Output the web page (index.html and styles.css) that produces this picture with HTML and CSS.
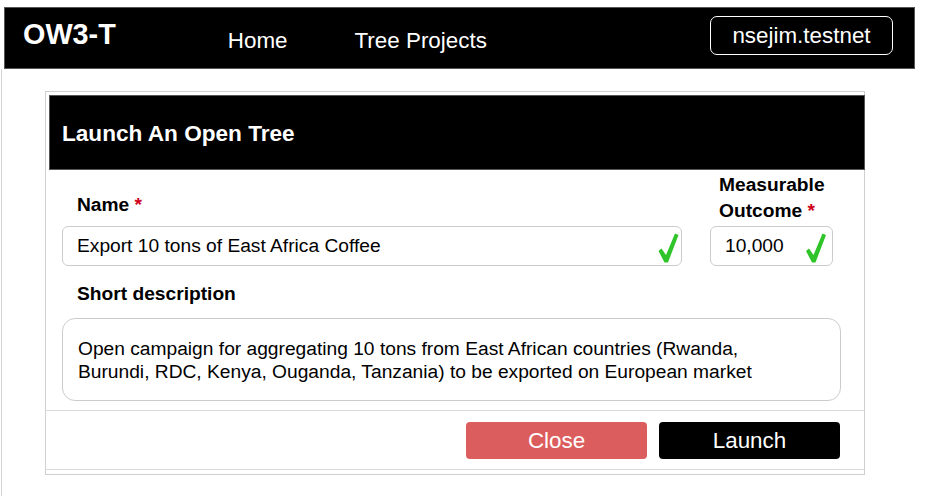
FILE: index.html
```html
<!DOCTYPE html>
<html lang="en">
<head>
<meta charset="utf-8">
<title>OW3-T</title>
<link rel="stylesheet" href="styles.css">
</head>
<body>
<nav class="topbar">
  <div class="brand">OW3-T</div>
  <div class="links">
    <a class="link" href="#">Home</a>
    <a class="link" href="#">Tree Projects</a>
  </div>
  <button class="account">nsejim.testnet</button>
</nav>
<main class="page">
  <section class="modal">
    <header class="modal-header">
      <h2 class="modal-title">Launch An Open Tree</h2>
    </header>
    <div class="modal-body">
      <div class="fields">
        <div class="field field-name">
          <label class="label label-name">Name <span class="req">*</span></label>
          <div class="input input-name">
            <span class="value">Export 10 tons of East Africa Coffee</span>
            <svg class="check" viewBox="0 0 20 30" width="21" height="30"><polygon points="0,18 3,15.5 7.5,22 16.5,0.5 20,2 9.5,29.5 6,29.5"/></svg>
          </div>
        </div>
        <div class="field field-outcome">
          <label class="label label-outcome">Measurable<br>Outcome <span class="req">*</span></label>
          <div class="input input-outcome">
            <span class="value">10,000</span>
            <svg class="check" viewBox="0 0 20 30" width="20" height="30"><polygon points="0,18 3,15.5 7.5,22 16.5,0.5 20,2 9.5,29.5 6,29.5"/></svg>
          </div>
        </div>
      </div>
      <label class="label label-desc">Short description</label>
      <div class="textarea">Open campaign for aggregating 10 tons from East African countries (Rwanda, Burundi, RDC, Kenya, Ouganda, Tanzania) to be exported on European market</div>
    </div>
    <footer class="modal-footer">
      <button class="btn btn-close">Close</button>
      <button class="btn btn-launch">Launch</button>
    </footer>
  </section>
</main>
</body>
</html>
```
FILE: styles.css
```css
* { box-sizing: border-box; }
html, body { margin: 0; padding: 0; background: #fff; }
body {
  font-family: "Liberation Sans", Arial, sans-serif;
  color: #000;
  width: 929px;
  height: 496px;
  overflow: hidden;
}
.topbar {
  margin: 7px 14px 0 4px;
  height: 62px;
  background: #000;
  border: 1px solid #555;
  display: flex;
  align-items: center;
  padding: 0 21px 0 18px;
}
.brand {
  color: #fff;
  font-weight: bold;
  font-size: 28.8px;
  line-height: 34px;
  margin-bottom: 8px;
}
.links {
  display: flex;
  gap: 67px;
  margin-left: 112px;
  margin-top: 5px;
}
.link {
  color: #fff;
  text-decoration: none;
  font-size: 22.4px;
  line-height: 28px;
}
.account {
  margin-left: auto;
  margin-bottom: 5px;
  height: 39px;
  width: 183px;
  padding: 0;
  background: #000;
  color: #fff;
  border: 1px solid #fff;
  border-radius: 7px;
  font-family: inherit;
  font-size: 22.4px;
  line-height: 26px;
}
.page {
  border-left: 1px solid #d4d4d4;
  margin-left: 1px;
  height: 427px;
  padding-top: 22px;
}
.modal {
  margin-left: 43px;
  width: 820px;
  height: 384px;
  border: 1px solid #cfcfcf;
  padding: 3px 0 4px 3px;
  display: flex;
  flex-direction: column;
}
.modal-header {
  margin-right: -1px;
  height: 75px;
  background: #000;
  border: 1px solid #555;
  display: flex;
  align-items: center;
  padding: 3px 0 0 12px;
}
.modal-title {
  margin: 0;
  color: #fff;
  font-size: 22.6px;
  font-weight: bold;
  line-height: 28px;
}
.modal-body {
  margin-left: -3px;
  padding: 2px 23px 0 16px;
  flex: 1;
}
.fields {
  display: flex;
  align-items: flex-end;
  gap: 28px;
}
.field { display: flex; flex-direction: column; }
.field-name { width: 620px; }
.field-outcome { width: 123px; }
.label {
  display: block;
  font-weight: bold;
  font-size: 19.2px;
  line-height: 26px;
}
.label-name { padding-left: 15px; margin-bottom: 8px; }
.label-outcome { padding-left: 9px; margin-bottom: 2px; }
.req { color: #d0021b; }
.input {
  height: 40px;
  border: 1px solid #cccccc;
  border-radius: 6px;
  display: flex;
  align-items: center;
  font-size: 19.2px;
  padding-left: 14px;
  position: relative;
}
.value { line-height: 24px; }
.check {
  position: absolute;
  top: 6px;
  fill: #2fc42a;
}
.input-name .check { right: 2px; }
.input-outcome .check { right: 6px; }
.label-desc { padding-left: 15px; margin-top: 15px; margin-bottom: 11px; }
.textarea {
  height: 83px;
  border: 1px solid #cccccc;
  border-radius: 13px;
  padding: 18px 40px 0 15px;
  font-size: 19.2px;
  line-height: 23px;
}
.modal-footer {
  margin-left: -3px;
  border-top: 1px solid #dcdcdc;
  border-bottom: 1px solid #dcdcdc;
  height: 60px;
  display: flex;
  justify-content: flex-end;
  align-items: flex-start;
  gap: 12px;
  padding: 11px 24px 0 0;
}
.btn {
  height: 37px;
  width: 181px;
  border: none;
  border-radius: 4px;
  color: #fff;
  font-family: inherit;
  font-size: 22.4px;
  line-height: 26px;
}
.btn-close { background: #dc5d5d; }
.btn-launch { background: #000; }
```
